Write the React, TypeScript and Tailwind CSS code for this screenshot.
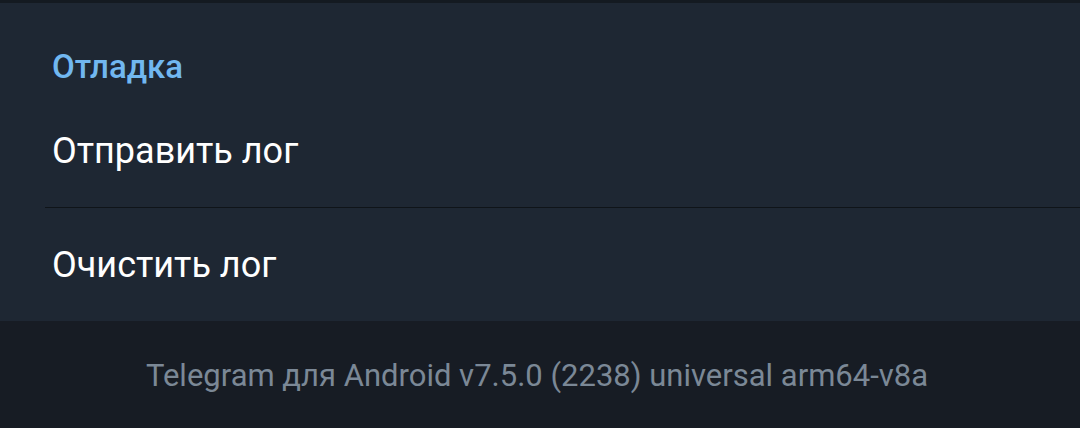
export default function App() {
  return (
    <div
      className="w-[1080px] h-[428px] overflow-hidden bg-[#171c24] flex flex-col"
      style={{ fontFamily: "Roboto, 'Noto Sans', sans-serif" }}
    >
      <div className="h-[3px] bg-[#141a21]" />
      <div className="bg-[#1e2733] flex flex-col">
        <div className="h-[92px] pl-[52px] pt-[42px]">
          <h2 className="text-[33px] leading-[44px] font-medium text-[#71b7f0]">Отладка</h2>
        </div>
        <div className="h-[112px] pl-[52px] flex items-center">
          <span className="text-[36px] text-white">Отправить лог</span>
        </div>
        <div className="ml-[45px] h-px bg-[#0f1419]" />
        <div className="h-[113px] pl-[52px] flex items-center">
          <span className="text-[36px] text-white">Очистить лог</span>
        </div>
      </div>
      <div className="flex-1 flex items-center justify-center pt-[4px] pr-[6px]">
        <p className="text-[31px] text-[#7b8896]">Telegram для Android v7.5.0 (2238) universal arm64-v8a</p>
      </div>
    </div>
  );
}
